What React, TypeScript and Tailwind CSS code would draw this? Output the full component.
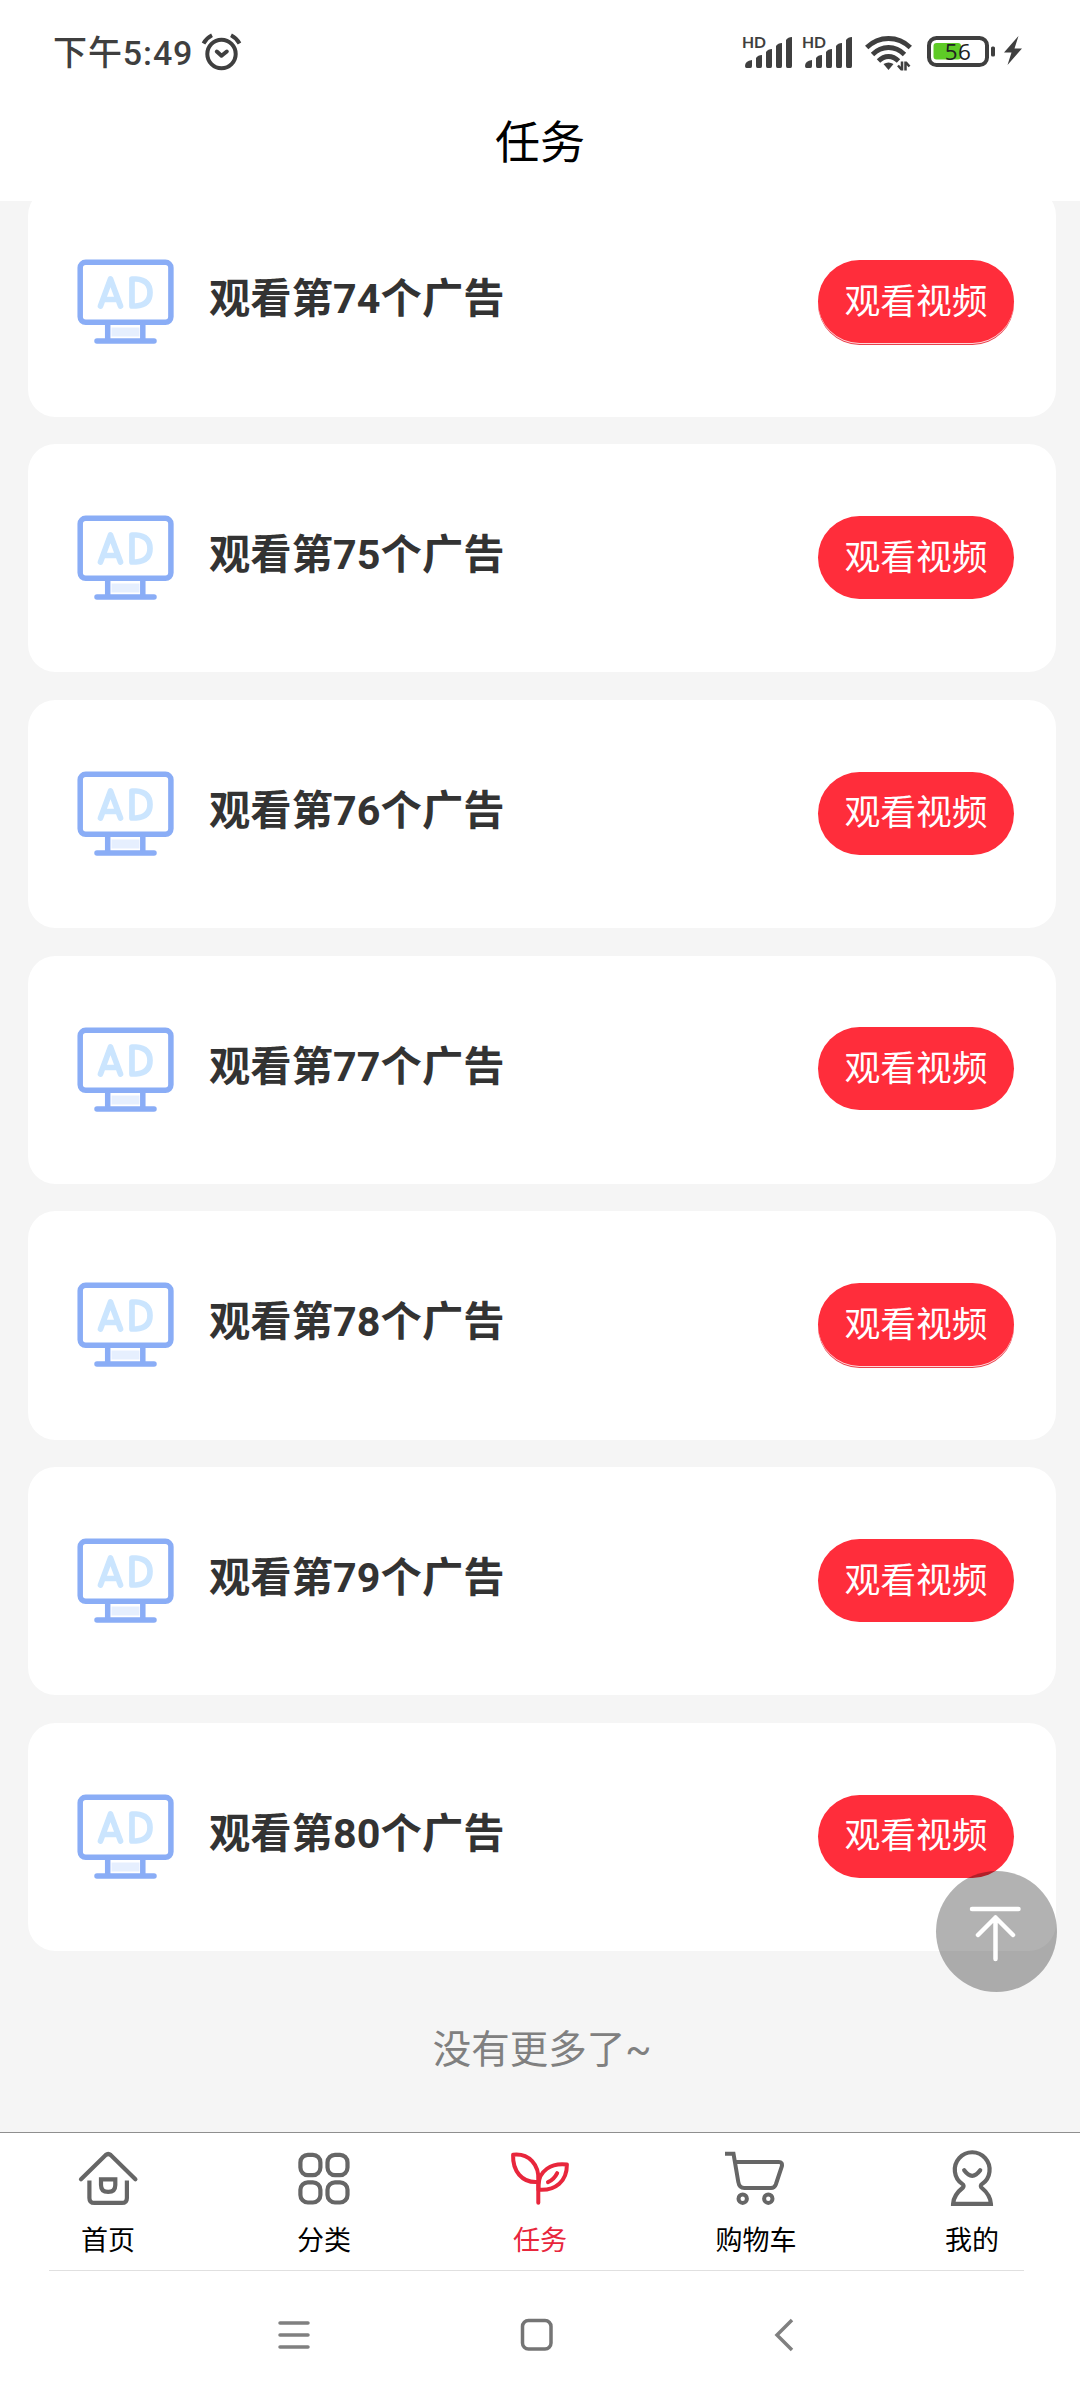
const tasks = [
  { index: 74, outlined: true },
  { index: 75 },
  { index: 76 },
  { index: 77 },
  { index: 78, outlined: true },
  { index: 79 },
  { index: 80 },
];

const AlarmIcon = () => (
  <svg width="42" height="40" viewBox="0 0 42 40" fill="none" stroke="#3f3f3f" strokeWidth="4" strokeLinecap="round" strokeLinejoin="round">
    <circle cx="20.5" cy="22" r="14.2" />
    <path d="M15.8 19.5l4.7 4.2 5.3-4.2" />
    <path d="M2.500 11.500Q5.500 6 11 3.300M38.500 11.500Q35.500 6 30 3.300" strokeLinecap="butt" />
  </svg>
);

const SignalIcon = () => (
  <svg className="-ml-[2px] -mt-[6px]" width="52" height="40" viewBox="-2 -6 52 40" fill="#3f3f3f">
    <text x="-1" y="12.300" fontSize="16" fontWeight="700" fontFamily="Lato, sans-serif" textLength="24" lengthAdjust="spacingAndGlyphs">
      HD
    </text>
    <path d="M2 30q0-5 7-6v6q0 2-1.500 2h-4q-1.500 0-1.500-2z" />
    <path d="M13 22q2-3 6-3v11q0 2-1.500 2h-3q-1.500 0-1.500-2z" />
    <path d="M23 16q2-3 6-3v17q0 2-1.500 2h-3q-1.500 0-1.500-2z" />
    <path d="M33 10q2-3 6-3v23q0 2-1.500 2h-3q-1.500 0-1.500-2z" />
    <path d="M43 4q2-3 6-3v29q0 2-1.500 2h-3q-1.500 0-1.500-2z" />
  </svg>
);

const WifiIcon = () => (
  <svg width="48" height="36" viewBox="0 0 48 36" fill="none" stroke="#3f3f3f" strokeWidth="4.800">
    <path d="M1.700 11.500Q11 2.500 23.500 2.500T45.300 11.500" />
    <path d="M7.500 18.500Q14.500 11.500 23.500 11.500T39.500 18.500" />
    <path d="M13.500 25Q18 20.500 23.500 20.500T33.500 25" />
    <path d="M18.500 28q5-3 10 0l-5 6z" fill="#3f3f3f" stroke="none" />
    <path d="M37 25.500v9M33 29.500l3.500 4M40.500 34.500v-9M44.500 30.500l-3.500-4" strokeWidth="2.500" />
  </svg>
);

const BatteryIcon = () => (
  <svg width="70" height="32" viewBox="0 0 70 32">
    <rect x="2" y="2" width="58" height="27" rx="7.500" fill="none" stroke="#3f3f3f" strokeWidth="4" />
    <rect x="6.500" y="7" width="27.500" height="16.500" rx="3" fill="#5ecb26" />
    <rect x="64" y="10.500" width="4" height="10" rx="1.500" fill="#3f3f3f" />
    <text x="17.800" y="24" fontSize="22.500" fontFamily="Open Sans, sans-serif" fill="#222" textLength="26">
      56
    </text>
  </svg>
);

const BoltIcon = () => (
  <svg width="20" height="30" viewBox="0 0 20 30" fill="#3f3f3f">
    <path d="M15.500 0L1 16.500h7.500L4.500 29 19 12.500h-7.500z" />
  </svg>
);

const AdIcon = () => (
  <svg className="block" width="98" height="88" viewBox="0 0 98 88" fill="none" stroke="#8aadf6" strokeWidth="5.500" strokeLinecap="round">
    <rect x="3.200" y="4.300" width="90.700" height="60" rx="5.500" />
    <path d="M34.500 69.500h28v9h-28z" fill="#e6effe" stroke="none" />
    <path d="M30.700 66v15M65.800 66v15M20 82.900h57" />
    <g stroke="#cbe5fe" strokeWidth="5.700" strokeLinejoin="round">
      <path d="M23.500 48L33.500 21l10 27M28 41.500h11" />
      <path d="M55 21v27h4q14-1 14-13.500T59 21z" />
    </g>
  </svg>
);

const HomeIcon = () => (
  <svg width="60" height="60" viewBox="0 0 60 60" fill="none" stroke="#666" strokeWidth="4.200">
    <path d="M3 34.300L27.700 10q2.500-2 5 0L57.400 34.300" strokeLinecap="round" />
    <path d="M11.400 35.500v17.400q0 5 5 5h27.500q5 0 5-5V35.500" />
    <path d="M23 34.400h14.300v5.500q0 7-7.150 7T23 39.900z" />
  </svg>
);

const GridIcon = () => (
  <svg width="60" height="60" viewBox="0 0 60 60" fill="none" stroke="#666" strokeWidth="4.200">
    <rect x="6.400" y="9.900" width="20" height="20.200" rx="7.500" />
    <rect x="33.500" y="9.900" width="20" height="20.200" rx="7.500" />
    <rect x="6.400" y="37.300" width="20" height="20.200" rx="7.500" />
    <rect x="33.500" y="37.300" width="20" height="20.200" rx="7.500" />
  </svg>
);

const SproutIcon = () => (
  <svg width="60" height="60" viewBox="0 0 60 60" fill="none" stroke="#e8263c" strokeWidth="4" strokeLinecap="round" strokeLinejoin="round">
    <path d="M28.300 57.700V36C29.500 20 19 8 3.100 9.800 2.500 26 12 38 27.500 37" />
    <path d="M28.500 44.700C46 46 57 36 56.900 19.500 41 17.500 29 26 28.500 40z" />
    <path d="M38 37.200q6-2.500 9.200-9" />
  </svg>
);

const CartIcon = () => (
  <svg width="60" height="60" viewBox="0 0 60 60" fill="none" stroke="#666" strokeWidth="4">
    <path d="M-1 8.700h8.500L12.300 37q1 6 6 6H45q3.500 0 4.800-3.500L55.800 21.500q1-4.500-3-4.500H9.500" />
    <circle cx="16.700" cy="53.700" r="4.200" />
    <circle cx="42.300" cy="53.700" r="4.200" />
  </svg>
);

const MineIcon = () => (
  <svg width="60" height="60" viewBox="0 0 60 60" fill="none" stroke="#666" strokeWidth="4.200">
    <path d="M21 42.500q1.500-2-.8-3.600A17.400 17.400 0 1 1 40.200 38.900q-2.300 1.600-.8 3.600Q48.500 50 48.900 58.900H11.100Q11.500 50 21 42.500z" />
    <path d="M22.200 25.300q8 11 16 0" strokeLinecap="round" />
  </svg>
);

const tabs = [
  { label: "首页", icon: <HomeIcon /> },
  { label: "分类", icon: <GridIcon /> },
  { label: "任务", icon: <SproutIcon />, active: true },
  { label: "购物车", icon: <CartIcon /> },
  { label: "我的", icon: <MineIcon /> },
];

const StatusBar = () => (
  <div className="flex h-[104px] items-start justify-between pl-[53px] pr-[57px] pt-[32px]">
    <div className="flex items-start gap-[7px]">
      <span className="mt-px h-[40px] w-[141px] whitespace-nowrap text-[34px] font-medium leading-[40px] tracking-[0.9px] text-[#3f3f3f]">
        下午5:49
      </span>
      <AlarmIcon />
    </div>
    <div className="flex items-start pt-[4px]">
      <SignalIcon />
      <div className="w-[10px]" />
      <SignalIcon />
      <div className="w-[12px]" />
      <WifiIcon />
      <div className="w-[14px]" />
      <BatteryIcon />
      <div className="w-[6px]" />
      <BoltIcon />
    </div>
  </div>
);

const TaskCard = ({ index, outlined }: { index: number; outlined?: boolean }) => (
  <div className="flex h-[228.25px] shrink-0 items-center rounded-[27.5px] bg-white pl-[49px] pr-[42px]">
    <AdIcon />
    <h3 className="ml-[34px] flex-1 pb-[6px] text-[41.25px] font-bold leading-[56px] tracking-[0.1px] text-[#333]">观看第{index}个广告</h3>
    <button
      className={
        outlined
          ? "mb-[1.5px] h-[83px] w-[196px] rounded-full bg-[#ff2d3b] pt-[2px] text-[35.75px] text-white shadow-[0_1px_0_#ffd5d8,0_2px_0_#e8404c]"
          : "mb-[1.5px] h-[83px] w-[196px] rounded-full bg-[#ff2d3b] pt-[2px] text-[35.75px] text-white"
      }
    >
      观看视频
    </button>
  </div>
);

const App = () => {
  return (
    <div className="relative flex h-[2400px] w-[1080px] flex-col overflow-hidden bg-white font-[Roboto,'Noto_Sans_CJK_SC',sans-serif]">
      <header className="h-[201px] shrink-0">
        <StatusBar />
        <h1 className="pt-[1px] text-center text-[45px] leading-[77px] text-black">任务</h1>
      </header>
      <main className="flex h-[1931px] shrink-0 flex-col justify-end gap-[27.5px] overflow-hidden bg-[#f5f5f5] pl-[28px] pr-[24px]">
        {tasks.map((task) => (
          <TaskCard key={task.index} index={task.index} outlined={task.outlined} />
        ))}
        <p className="-mt-[27.5px] h-[181px] shrink-0 pt-[71px] text-center text-[38.5px] leading-[56px] text-[#808080]">没有更多了~</p>
      </main>
      <nav className="flex h-[138px] shrink-0 border-t border-[#8f8f8f]">
        {tabs.map((tab) => (
          <div key={tab.label} className="flex flex-1 flex-col items-center pt-[12px]">
            <div className="h-[60px] w-[60px] [&>svg]:overflow-visible">{tab.icon}</div>
            <span className={tab.active ? "mt-[16px] text-[27px] leading-[40px] text-[#e8263c]" : "mt-[16px] text-[27px] leading-[40px] text-black"}>
              {tab.label}
            </span>
          </div>
        ))}
      </nav>
      <div className="ml-[49px] mr-[56px] flex h-[129px] items-center border-t border-[#e0e0e0] pl-[229px]">
        <svg width="32" height="30" viewBox="0 0 32 30" stroke="#808080" strokeWidth="3.500" strokeLinecap="round">
          <path d="M2 3h28M2 15h28M2 27h28" />
        </svg>
        <svg className="ml-[210px]" width="34" height="34" viewBox="0 0 34 34" fill="none" stroke="#757575" strokeWidth="3.500">
          <rect x="2.500" y="2.500" width="28.500" height="28.500" rx="6" />
        </svg>
        <svg className="ml-[220px]" width="20" height="34" viewBox="0 0 20 34" fill="none" stroke="#808080" strokeWidth="3.500">
          <path d="M18 2L3 17l15 15" />
        </svg>
      </div>
      <button className="absolute left-[936px] top-[1871px] flex h-[121px] w-[121px] items-center justify-center rounded-full bg-black/30">
        <svg width="56" height="60" viewBox="0 0 56 60" fill="none" stroke="#fff" strokeWidth="4.500" strokeLinecap="round" strokeLinejoin="round">
          <path d="M3 7h46.500M26.500 57V15.500M9 33L26.500 15.500 44 33" />
        </svg>
      </button>
    </div>
  );
};

export default App;
